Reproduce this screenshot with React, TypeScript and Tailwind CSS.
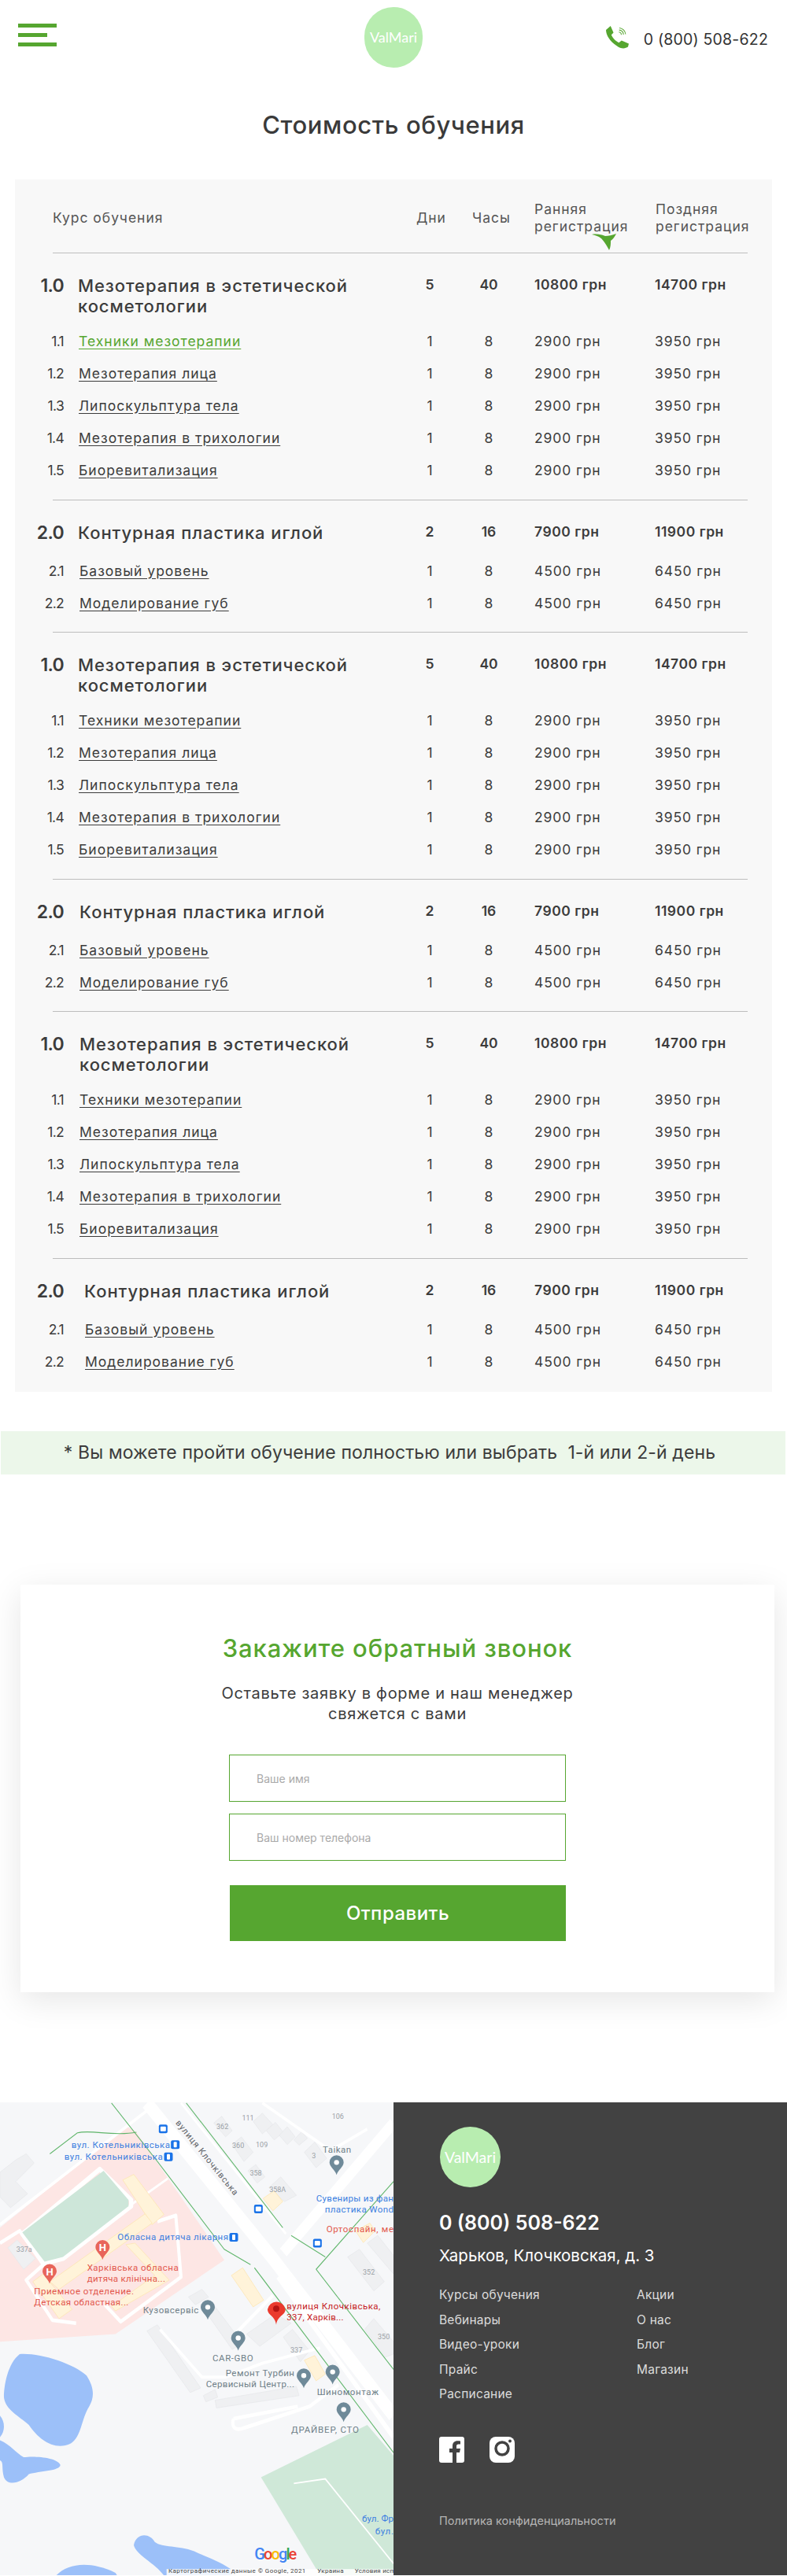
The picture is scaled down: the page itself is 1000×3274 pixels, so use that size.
import React from "react";

type Sub = { n: string; name: string; a: string; b: string; active?: boolean };
type Group = {
  n: string;
  title: string;
  days: string;
  hours: string;
  a: string;
  b: string;
  subs: Sub[];
};

const meso: Group = {
  n: "1.0",
  title: "Мезотерапия в эстетической косметологии",
  days: "5",
  hours: "40",
  a: "10800 грн",
  b: "14700 грн",
  subs: [
    { n: "1.1", name: "Техники мезотерапии", a: "2900 грн", b: "3950 грн" },
    { n: "1.2", name: "Мезотерапия лица", a: "2900 грн", b: "3950 грн" },
    { n: "1.3", name: "Липоскульптура тела", a: "2900 грн", b: "3950 грн" },
    { n: "1.4", name: "Мезотерапия в трихологии", a: "2900 грн", b: "3950 грн" },
    { n: "1.5", name: "Биоревитализация", a: "2900 грн", b: "3950 грн" },
  ],
};

const contour: Group = {
  n: "2.0",
  title: "Контурная пластика иглой",
  days: "2",
  hours: "16",
  a: "7900 грн",
  b: "11900 грн",
  subs: [
    { n: "2.1", name: "Базовый уровень", a: "4500 грн", b: "6450 грн" },
    { n: "2.2", name: "Моделирование губ", a: "4500 грн", b: "6450 грн" },
  ],
};

const rowCols = "grid grid-cols-[491px_72px_78px_172px_149px]";

function Divider() {
  return <div className="ml-[48px] h-px w-[883px] bg-[#bdbdbd]" />;
}

function CourseGroup({
  group,
  titlePad,
  namePad,
  firstActive,
}: {
  group: Group;
  titlePad: string;
  namePad: string;
  firstActive?: boolean;
}) {
  const long = group.subs.length > 2;
  return (
    <div className={long ? "pt-[28px] pb-[17px]" : "pt-[28px] pb-[16px]"}>
      <div className={`${rowCols} ${long ? "mb-[11px]" : "mb-[15px]"}`}>
        <div className="flex">
          <div className="w-[62px] shrink-0 text-right text-[23px] leading-[26px] font-semibold tracking-[-0.03em]">{group.n}</div>
          <div className={`${titlePad} max-w-[440px] text-[22px] leading-[26px] font-medium tracking-[0.042em]`}>{group.title}</div>
        </div>
        <div className="text-center text-[17.5px] leading-[24px] font-semibold">{group.days}</div>
        <div className="text-center text-[17.5px] leading-[24px] font-semibold">{group.hours}</div>
        <div className="pl-[19px] text-[17.5px] leading-[24px] font-semibold tracking-[0.03em]">{group.a}</div>
        <div className="text-[17.5px] leading-[24px] font-semibold tracking-[0.03em]">{group.b}</div>
      </div>
      {group.subs.map((s, i) => (
        <div key={s.n} className={`${rowCols} h-[41px] items-center text-[17.5px] leading-[24px]`}>
          <div className="flex items-center">
            <div className="w-[62px] shrink-0 text-right tracking-[-0.04em]">{s.n}</div>
            <div className={namePad}>
              <span
                className={
                  firstActive && i === 0
                    ? "text-[#56a630] underline underline-offset-[3px] tracking-[0.057em]"
                    : "underline underline-offset-[3px] tracking-[0.057em]"
                }
              >
                {s.name}
              </span>
            </div>
          </div>
          <div className="text-center">1</div>
          <div className="text-center">8</div>
          <div className="pl-[19px] tracking-[0.05em]">{s.a}</div>
          <div className="tracking-[0.05em]">{s.b}</div>
        </div>
      ))}
    </div>
  );
}

function PriceTable() {
  return (
    <div className="relative ml-[19px] w-[962px] bg-[#f8f8f8] pt-[27px] pb-[2px] text-[#3c3c3c]">
      <div className={`${rowCols} items-center pb-[22px] text-[17.5px] leading-[22px] tracking-[0.055em] text-[#555]`}>
        <div className="pl-[48px]">Курс обучения</div>
        <div className="pl-[19px]">Дни</div>
        <div className="pl-[18px]">Часы</div>
        <div className="pl-[19px]">Ранняя<br />регистрация</div>
        <div className="pl-px">Поздняя<br />регистрация</div>
      </div>
      <svg className="absolute top-[69px] left-[733px]" width="31" height="21" viewBox="0 0 31 21">
        <path d="M0 1 C6 0 12 1 17 3 C21 3 26 2 31 0 C29 4 27 7 24 9 C24 13 24 17 22 21 C20 17 16 10 12 6 C8 3 4 2 0 1Z" fill="#56a630" />
      </svg>
      <Divider />
      <CourseGroup group={meso} titlePad="pl-[18px]" namePad="pl-[19px]" firstActive />
      <Divider />
      <CourseGroup group={contour} titlePad="pl-[18px]" namePad="pl-[20px]" />
      <Divider />
      <CourseGroup group={meso} titlePad="pl-[18px]" namePad="pl-[19px]" />
      <Divider />
      <CourseGroup group={contour} titlePad="pl-[20px]" namePad="pl-[20px]" />
      <Divider />
      <CourseGroup group={meso} titlePad="pl-[20px]" namePad="pl-[20px]" />
      <Divider />
      <CourseGroup group={contour} titlePad="pl-[26px]" namePad="pl-[27px]" />
    </div>
  );
}

function Logo({ className }: { className: string }) {
  return (
    <div className={`flex items-center justify-center rounded-full bg-[#b8edb0] font-['Lato','Noto_Sans',sans-serif] font-normal text-white ${className}`}>
      ValMari
    </div>
  );
}

function PhoneIcon() {
  return (
    <svg width="29" height="29" viewBox="0 0 85 85" fill="none">
      <path d="M0 15 L17 0 L28 25 L20 33 C24 45 38 58 48 62 L58 54 L85 66 L82 78 C70 86 55 85 40 74 C15 58 0 35 0 15Z" fill="#56a630" />
      <g stroke="#56a630" strokeWidth="3">
        <path d="M48 23 A10 10 0 0 1 57 33" />
        <path d="M49 15 A18 18 0 0 1 65 32" />
        <path d="M50 7 A26 26 0 0 1 73 31" />
      </g>
    </svg>
  );
}

function Header() {
  return (
    <div className="grid h-[96px] grid-cols-3">
      <div className="flex w-[49px] flex-col gap-[7px] pt-[30px] ml-[23px]">
        <div className="h-[5px] w-[49px] bg-[#56a630]" />
        <div className="h-[5px] w-[37px] bg-[#56a630]" />
        <div className="h-[5px] w-[49px] bg-[#56a630]" />
      </div>
      <div className="flex justify-center pt-[9px]">
        <Logo className="h-[77px] w-[74px] text-[18px]" />
      </div>
      <div className="flex items-start justify-end pt-[33px] pr-[24px]">
        <PhoneIcon />
        <span className="ml-[19px] pt-[3px] text-[19.5px] leading-[28px] tracking-[0.01em] text-[#333]">0 (800) 508-622</span>
      </div>
    </div>
  );
}

function CallbackCard() {
  return (
    <div className="mt-[140px] ml-[26px] w-[958px] bg-white pt-[61px] pb-[65px] shadow-[0_10px_40px_rgba(0,0,0,0.1)]">
      <h2 className="text-center text-[31px] leading-[40px] font-medium tracking-[0.03em] text-[#56a630]">Закажите обратный звонок</h2>
      <p className="mx-auto mt-[24px] w-[500px] text-center text-[20px] leading-[26px] tracking-[0.036em] text-[#3c3c3c]">
        Оставьте заявку в форме и наш менеджер свяжется с вами
      </p>
      <div className="mt-[39px] ml-[265px] flex w-[428px] flex-col gap-[15px]">
        <input
          placeholder="Ваше имя"
          className="h-[60px] border border-[#56a630] pl-[34px] text-[14px] outline-none placeholder:text-[#aaa]"
        />
        <input
          placeholder="Ваш номер телефона"
          className="h-[60px] border border-[#56a630] pl-[34px] text-[14px] outline-none placeholder:text-[#aaa]"
        />
      </div>
      <button className="mt-[31px] ml-[266px] block h-[71px] w-[427px] bg-[#56a630] text-[24px] font-medium tracking-[0.02em] text-white">Отправить</button>
    </div>
  );
}

// the map picture was measured on a 1500x1568 crop, so shapes go in a scaled group
const X = (z: number) => z / 3;
const Y = (z: number) => (z - 33) / 2.554;

type Label = [string, number, number, number, string];

const BLUE = "#3d7fe0";
const RED = "#e2574c";
const GRAY = "#6f7f88";

const labels: Label[] = [
  ["вул. Котельниківська", 272, 170, 376, BLUE],
  ["вул. Котельниківська", 245, 210, 375, BLUE],
  ["Taikan", 1230, 185, 108, GRAY],
  ["Сувениры из фан", 1205, 344, 295, BLUE],
  ["пластика Wond", 1238, 380, 262, BLUE],
  ["Ортоспайн, ме", 1244, 444, 256, RED],
  ["Обласна дитяча лікарня", 448, 471, 422, BLUE],
  ["Харківська обласна", 332, 569, 348, RED],
  ["дитяча клінічна...", 332, 605, 298, RED],
  ["Приемное отделение.", 130, 645, 380, RED],
  ["Детская областная...", 130, 681, 360, RED],
  ["Кузовсервіс", 545, 708, 212, GRAY],
  ["вулиця Клочківська,", 1093, 695, 357, "#c5221f"],
  ["337, Харків...", 1093, 731, 217, "#c5221f"],
  ["CAR-GBO", 810, 863, 155, GRAY],
  ["Ремонт Турбин", 860, 912, 262, GRAY],
  ["Сервисный Центр...", 785, 948, 337, GRAY],
  ["Шиномонтаж", 1208, 972, 235, GRAY],
  ["ДРАЙВЕР, СТО", 1110, 1095, 258, GRAY],
  ["бул. Фр", 1380, 1385, 120, BLUE],
  ["бул.", 1430, 1426, 70, BLUE],
];

const houseNumbers: [string, number, number][] = [
  ["362", 848, 113],
  ["360", 908, 173],
  ["109", 998, 170],
  ["111", 945, 85],
  ["106", 1288, 78],
  ["358", 975, 263],
  ["358A", 1058, 316],
  ["3", 1196, 207],
  ["352", 1406, 584],
  ["350", 1463, 794],
  ["337", 1130, 838],
  ["337a", 92, 510],
];

const grayPins: [number, number][] = [
  [1283, 205],
  [792, 675],
  [908, 775],
  [1158, 897],
  [1268, 885],
  [1310, 1007],
];

const buildings = [
  "M0 260 L60 220 L100 200 L130 230 L60 290 L105 330 L40 375 L0 340Z",
  "M815 100 L845 78 L885 125 L860 145Z",
  "M885 170 L920 145 L965 195 L930 225Z",
  "M945 255 L975 235 L1010 275 L980 295Z",
  "M965 95 L1000 68 L1040 105 L1000 135Z",
  "M1015 125 L1050 98 L1080 130 L1045 155Z",
  "M1065 140 L1095 112 L1125 145 L1095 170Z",
  "M1120 155 L1150 128 L1172 150 L1140 172Z",
  "M1160 195 L1200 162 L1245 215 L1205 245Z",
  "M1025 310 L1070 275 L1130 335 L1085 355Z",
  "M1325 535 L1370 510 L1465 615 L1425 645Z",
  "M1390 770 L1425 735 L1500 810 L1500 850 L1470 860Z",
  "M1080 795 L1115 770 L1180 840 L1145 875Z",
  "M30 505 L65 480 L135 540 L90 575Z",
  "M718 665 L770 640 L795 665 L745 690Z",
  "M560 775 L600 755 L765 960 L725 975Z",
  "M765 690 L805 680 L925 815 L885 835Z",
  "M940 785 L1050 720 L1110 750 L990 825Z",
  "M820 1000 L1130 955 L1140 985 L825 1025Z",
  "M775 985 L820 965 L830 990 L785 1005Z",
  "M1400 490 L1440 465 L1500 530 L1500 590Z",
];

const yellows = [
  "M468 285 L510 267 L625 397 L580 430 L553 395Z",
  "M553 395 L580 425 L225 640 L190 615Z",
  "M125 615 L165 590 L275 705 L225 735Z",
  "M480 495 L515 490 L645 610 L440 710 L425 695 L590 595Z",
  "M882 595 L925 570 L1005 675 L965 697Z",
  "M1003 345 L1045 320 L1078 355 L1040 385Z",
  "M1160 870 L1200 855 L1240 915 L1205 937Z",
  "M1355 450 L1410 425 L1430 450 L1385 488Z",
];

const whiteRoads: [string, number][] = [
  ["M560 35 L1040 540 L1500 1050", 44],
  ["M1080 520 L1500 100", 36],
  ["M690 35 L1090 460", 8],
  ["M1060 600 L1500 1120", 16],
  ["M1000 35 L1260 190 L1400 120", 10],
  ["M380 250 L500 350 L500 370 L240 540 L170 555 L85 460 Z", 16],
  ["M0 430 L560 60", 10],
  ["M600 420 L670 400 L690 600 L460 745 L400 690", 12],
  ["M0 490 L75 450 L165 560 L100 610 L200 740 L290 750", 12],
  ["M205 545 L640 280", 8],
  ["M610 770 L770 925 L860 925 L1000 880 L1220 830", 10],
  ["M890 790 L1040 660", 12],
  ["M890 1060 L1135 1020 M890 1060 C880 1090 900 1100 930 1090 L1180 1020 L1290 950", 12],
];

const greenLines = [
  "M425 35 L600 225 L855 510 L955 560",
  "M970 570 L1500 1170",
  "M710 35 L1078 440",
  "M1110 465 L1240 535",
  "M1205 575 L1500 290",
  "M1205 575 L1500 900",
  "M190 200 L295 132 C350 120 430 145 520 130",
];

function GrayPin({ x, y }: { x: number; y: number }) {
  const cx = X(x);
  const top = Y(y);
  return (
    <g>
      <path d={`M${cx} ${top + 25} C${cx - 2} ${top + 18} ${cx - 9} ${top + 15} ${cx - 9} ${top + 9} A9 9 0 0 1 ${cx + 9} ${top + 9} C${cx + 9} ${top + 15} ${cx + 2} ${top + 18} ${cx} ${top + 25}Z`} fill="#6f8a99" />
      <circle cx={cx} cy={top + 9} r="3.2" fill="#fff" />
    </g>
  );
}

function HospitalPin({ x, y }: { x: number; y: number }) {
  const cx = X(x);
  const top = Y(y);
  return (
    <g>
      <path d={`M${cx} ${top + 25} C${cx - 2} ${top + 18} ${cx - 9} ${top + 15} ${cx - 9} ${top + 9} A9 9 0 0 1 ${cx + 9} ${top + 9} C${cx + 9} ${top + 15} ${cx + 2} ${top + 18} ${cx} ${top + 25}Z`} fill="#e8655a" />
      <text x={cx} y={top + 14} textAnchor="middle" fontSize="13" fontWeight="700" fill="#fff">H</text>
    </g>
  );
}

function TransitBadge({ x, y, rail }: { x: number; y: number; rail?: boolean }) {
  const cx = X(x);
  const cy = Y(y);
  return (
    <g>
      <rect x={cx - 5.5} y={cy - 5.5} width="11" height="11" rx="2" fill="#1a73e8" />
      {rail ? <rect x={cx - 2} y={cy - 3.5} width="4" height="7" rx="1" fill="#fff" /> : <rect x={cx - 3.5} y={cy - 3} width="7" height="6" rx="1" fill="#fff" />}
    </g>
  );
}

function MapPicture() {
  return (
    <svg className="block h-full w-full bg-[#f6f7f9]" viewBox="0 0 500 601" style={{ fontFamily: "Roboto, sans-serif" }}>
      <g transform="scale(0.33333 0.39155) translate(0 -33)">
        <path d="M0 440 L480 110 L520 130 L855 545 L440 785 L0 810Z" fill="#fde6e4" />
        {buildings.map((d, i) => (
          <path key={i} d={d} fill="#eff0f2" stroke="#e6e8ea" strokeWidth="2" />
        ))}
        {whiteRoads.map(([d, w], i) => (
          <path key={i} d={d} fill="none" stroke="#fff" strokeWidth={w} strokeLinejoin="round" />
        ))}
        <path d="M85 455 L395 255 L490 350 L490 370 L240 535 L170 550Z" fill="#cde6d9" />
        {yellows.map((d, i) => (
          <path key={i} d={d} fill="#fff3d9" stroke="#fde5ad" strokeWidth="2" />
        ))}
        <path d="M995 1250 L1400 1080 L1500 1180 L1500 1568 L1220 1568Z" fill="#cfe8d8" />
        <path d="M1120 1270 L1240 1255 L1500 1530" fill="none" stroke="#fff" strokeWidth="5" />
        <g fill="#9cc0f9">
          <path d="M75 850 C150 845 280 880 330 920 C360 960 360 990 340 1020 C310 1060 310 1120 270 1140 C210 1165 150 1130 110 1080 C70 1050 20 1030 15 990 C15 950 30 880 75 850Z" />
          <path d="M0 1050 C20 1070 20 1100 0 1120Z" />
          <path d="M0 1130 C40 1145 60 1170 90 1185 C130 1180 220 1185 230 1210 C230 1230 150 1230 110 1240 C80 1270 30 1280 15 1250 C5 1220 15 1200 0 1195Z" />
          <path d="M510 1470 C520 1430 570 1430 590 1460 C620 1480 680 1470 740 1490 C790 1510 830 1520 880 1548 L880 1600 L640 1600 C630 1540 520 1510 510 1470Z" />
          <path d="M215 1568 C260 1530 340 1520 440 1560 L470 1600 L215 1600Z" />
        </g>
        {greenLines.map((d, i) => (
          <path key={i} d={d} fill="none" stroke="#5fb56a" strokeWidth="3" />
        ))}
      </g>

      {houseNumbers.map(([t, x, y]) => (
        <text key={`${t}${x}`} x={X(x)} y={Y(y) + 3} textAnchor="middle" fontSize="9" fill="#9aa0a6">{t}</text>
      ))}
      {labels.map(([t, x, y, w, c]) => (
        <text key={`${t}${x}${y}`} x={X(x)} y={Y(y) + 4} fontSize="11.5" fill={c} textLength={X(w)} lengthAdjust="spacing">{t}</text>
      ))}
      <text transform={`translate(${X(668)} ${Y(100)}) rotate(51)`} fontSize="11" fill="#5f6368" textLength="119" lengthAdjust="spacing">вулиця Клочківська</text>

      {grayPins.map(([x, y]) => (
        <GrayPin key={`${x}${y}`} x={x} y={y} />
      ))}
      <HospitalPin x={391} y={480} />
      <HospitalPin x={189} y={558} />
      <path d={`M${X(1053)} ${Y(755)} C${X(1048)} ${Y(725)} ${X(1020)} ${Y(725)} ${X(1020)} ${Y(705)} A11.5 11.5 0 0 1 ${X(1088)} ${Y(705)} C${X(1088)} ${Y(725)} ${X(1058)} ${Y(725)} ${X(1053)} ${Y(755)}Z`} fill="#ea3a2d" />
      <circle cx={X(1053)} cy={Y(703)} r="4" fill="#b31412" />

      <TransitBadge x={622} y={119} />
      <TransitBadge x={985} y={379} />
      <TransitBadge x={1210} y={490} />
      <TransitBadge x={668} y={170} rail />
      <TransitBadge x={642} y={210} rail />
      <TransitBadge x={891} y={471} rail />

      <text x={X(970)} y={Y(1516)} fontSize="20" fontWeight="500" textLength="54" lengthAdjust="spacing">
        <tspan fill="#4285f4">G</tspan>
        <tspan fill="#ea4335">o</tspan>
        <tspan fill="#fbbc05">o</tspan>
        <tspan fill="#4285f4">g</tspan>
        <tspan fill="#34a853">l</tspan>
        <tspan fill="#ea4335">e</tspan>
      </text>
      <rect x={X(635)} y={Y(1548)} width={X(865)} height="10" fill="#fff" fillOpacity="0.85" />
      <g fontSize="8" fill="#444">
        <text x={X(642)} y="598" textLength={X(523)} lengthAdjust="spacing">Картографические данные © Google, 2021</text>
        <text x={X(1210)} y="598" textLength={X(100)} lengthAdjust="spacing">Украина</text>
        <text x={X(1352)} y="598" textLength={X(148)} lengthAdjust="spacing">Условия исп</text>
      </g>
    </svg>
  );
}

function Footer() {
  const left = ["Курсы обучения", "Вебинары", "Видео-уроки", "Прайс", "Расписание"];
  const right = ["Акции", "О нас", "Блог", "Магазин"];
  return (
    <div className="mt-[140px] flex h-[601px]">
      <div className="h-full w-[500px] overflow-hidden">
        <MapPicture />
      </div>
      <div className="h-full w-[500px] bg-[#424242] pt-[31px] pl-[58px] text-white">
        <Logo className="ml-px h-[77px] w-[77px] text-[19.5px]" />
        <div className="mt-[30px] text-[25px] leading-[30px] font-semibold">0 (800) 508-622</div>
        <div className="mt-[14px] text-[20.5px] leading-[26px]">Харьков, Клочковская, д. 3</div>
        <div className="mt-[27px] flex text-[15.5px] leading-[20px] text-[#dcdcdc] tracking-[0.015em]">
          <div className="flex w-[251px] flex-col gap-[11.5px]">
            {left.map((t) => (
              <div key={t}>{t}</div>
            ))}
          </div>
          <div className="flex flex-col gap-[11.5px]">
            {right.map((t) => (
              <div key={t}>{t}</div>
            ))}
          </div>
        </div>
        <div className="mt-[44px] flex gap-[32px]">
          <svg width="32" height="33" viewBox="0 0 32 33">
            <rect width="32" height="33" rx="3" fill="#fff" />
            <path d="M22 33 V20 H26 L27 15 H22 V12 C22 10.5 22.7 9.5 24.5 9.5 H27 V5.5 C26 5.3 24.7 5.2 23.5 5.2 C19.5 5.2 17 7.5 17 11.5 V15 H13 V20 H17 V33Z" fill="#424242" />
          </svg>
          <svg width="32" height="33" viewBox="0 0 32 33">
            <rect width="32" height="33" rx="8" fill="#fff" />
            <circle cx="16" cy="15" r="8" fill="none" stroke="#424242" strokeWidth="3.5" />
            <circle cx="26" cy="5.5" r="2" fill="#424242" />
          </svg>
        </div>
        <div className="mt-[64px] text-[14.5px] leading-[20px] text-[#b5b5b5]">Политика конфиденциальности</div>
      </div>
    </div>
  );
}

export default function App() {
  return (
    <div className="w-[1000px] bg-white font-['Inter','Noto_Sans',sans-serif]">
      <Header />
      <h1 className="mt-[43px] mb-[49px] h-[40px] text-center text-[31px] leading-[40px] font-medium tracking-[0.02em] text-[#3a3a3a]">Стоимость обучения</h1>
      <PriceTable />
      <div className="mt-[50px] ml-px flex h-[55px] w-[997px] items-center justify-center bg-[#ecf7ea] pr-[9px] text-[23px] tracking-[0.005em] text-[#3c3c3c]">
        * Вы можете пройти обучение полностью или выбрать&nbsp; 1-й или 2-й день
      </div>
      <CallbackCard />
      <Footer />
    </div>
  );
}
